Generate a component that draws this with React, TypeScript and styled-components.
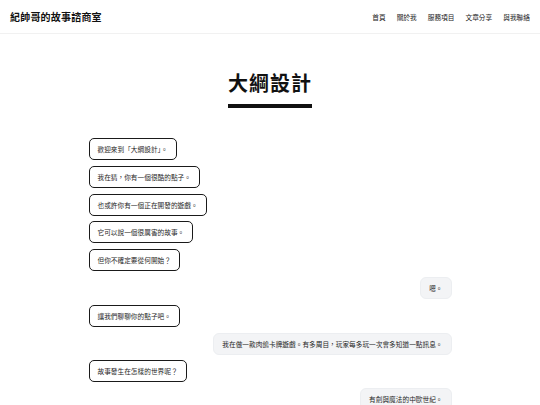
import styled, { createGlobalStyle } from "styled-components";

const GlobalStyle = createGlobalStyle`
  html, body {
    margin: 0;
    padding: 0;
    background: #ffffff;
  }
  body {
    font-family: "Noto Sans CJK TC", "Noto Sans", sans-serif;
    color: #1a1a1a;
  }
  * {
    box-sizing: border-box;
  }
`;

const Header = styled.header`
  height: 34px;
  display: flex;
  align-items: center;
  justify-content: space-between;
  padding: 0 10px;
  border-bottom: 1px solid #f1f1f1;
`;

const Brand = styled.div`
  font-size: 10px;
  font-weight: 700;
  color: #111;
  letter-spacing: 0.2px;
`;

const Nav = styled.nav`
  display: flex;
  gap: 11px;
`;

const NavLink = styled.a`
  font-size: 6.7px;
  color: #222;
  text-decoration: none;
`;

const Main = styled.main`
  display: flex;
  flex-direction: column;
  align-items: center;
  padding-top: 37px;
`;

const Title = styled.h1`
  margin: 0;
  font-size: 20px;
  line-height: 24px;
  font-weight: 700;
  letter-spacing: 1px;
  color: #111;
  padding-bottom: 9px;
  border-bottom: 4.5px solid #111;
`;

const Chat = styled.div`
  width: 363px;
  margin-top: 30px;
  display: flex;
  flex-direction: column;
  gap: 5.8px;
`;

const Bubble = styled.div<{ $me?: boolean }>`
  align-self: ${(p) => (p.$me ? "flex-end" : "flex-start")};
  font-size: 6.68px;
  line-height: 10px;
  padding: 5px 8px;
  border-radius: ${(p) => (p.$me ? "6px" : "5px")};
  border: 1px solid ${(p) => (p.$me ? "#eceef1" : "#1a1a1a")};
  background: ${(p) => (p.$me ? "#f3f4f6" : "#ffffff")};
  color: #1f1f1f;
  white-space: nowrap;
`;

const messages: { text: string; me?: boolean }[] = [
  { text: "歡迎來到「大綱設計」。" },
  { text: "我在猜，你有一個很酷的點子。" },
  { text: "也或許你有一個正在開發的遊戲。" },
  { text: "它可以說一個很厲害的故事。" },
  { text: "但你不確定要從何開始？" },
  { text: "嗯。", me: true },
  { text: "讓我們聊聊你的點子吧。" },
  {
    text: "我在做一款肉鴿卡牌遊戲。有多周目，玩家每多玩一次會多知道一點訊息。",
    me: true,
  },
  { text: "故事發生在怎樣的世界呢？" },
  { text: "有劍與魔法的中歐世紀。", me: true },
];

const links = ["首頁", "關於我", "服務項目", "文章分享", "與我聯絡"];

export default function App() {
  return (
    <>
      <GlobalStyle />
      <Header>
        <Brand>紀帥哥的故事諮商室</Brand>
        <Nav>
          {links.map((l) => (
            <NavLink key={l} href="#">
              {l}
            </NavLink>
          ))}
        </Nav>
      </Header>
      <Main>
        <Title>大綱設計</Title>
        <Chat>
          {messages.map((m, i) => (
            <Bubble key={i} $me={m.me}>
              {m.text}
            </Bubble>
          ))}
        </Chat>
      </Main>
    </>
  );
}
